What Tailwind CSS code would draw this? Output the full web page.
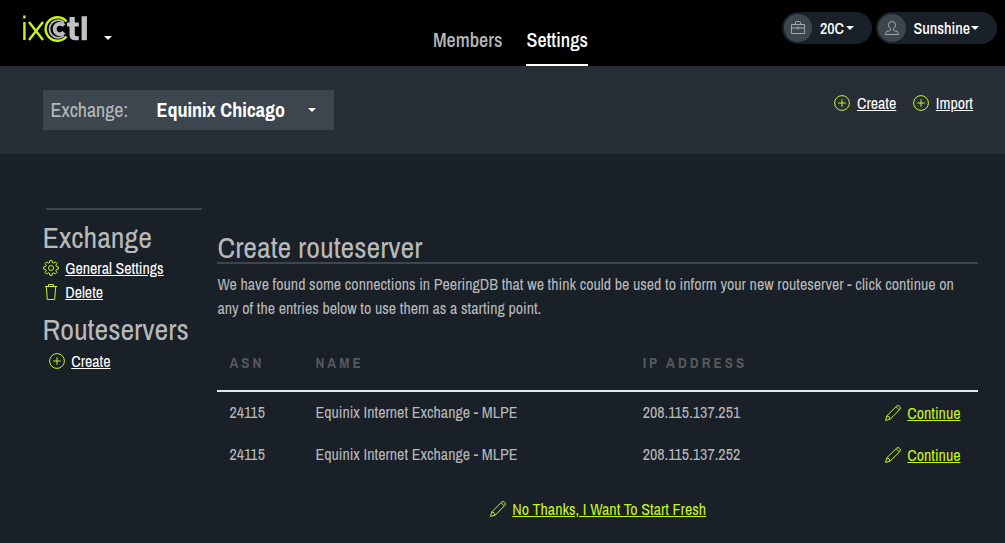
<!DOCTYPE html>
<html lang="en">
<head>
<meta charset="utf-8">
<title>ixCtl</title>
<script src="https://cdn.jsdelivr.net/npm/@tailwindcss/browser@4"></script>
</head>
<body class="h-[543px] w-[1005px] overflow-hidden bg-[#1a2027] font-['Archivo_Narrow','Liberation_Sans',sans-serif] text-base leading-6 text-[#b7b9ba]">
<svg class="hidden">
  <symbol id="plus" viewBox="0 0 16 16"><g fill="none" stroke="currentColor"><circle cx="8" cy="8" r="7.4"/><path d="M8 4.2v7.6M4.2 8h7.6"/></g></symbol>
  <symbol id="pencil" viewBox="0 0 16 16"><path fill="none" stroke="currentColor" stroke-linejoin="round" d="M.6 15.400 1.800 10.800 11.800 1Q13 0 14.200 1L15 1.800Q16 3 15 4.200L5.200 14.200ZM1.800 10.800Q4.600 11.200 5.200 14.200M11.200 1.800l3 3"/></symbol>
  <symbol id="caret" viewBox="0 0 8 4"><path fill="currentColor" d="M0 0h8L4 4z"/></symbol>
</svg>

<header class="flex h-[66px] justify-between bg-black">
  <div class="flex w-[433px] pl-[22px] pt-[13px]">
    <svg class="h-[30px] w-[68px]" viewBox="0 0 68 30" aria-label="ixCtl">
      <g fill="none" stroke="#c8f31d" stroke-width="2.4">
        <path d="M2.400 9v18M2.400 2.600v2.800"/>
        <path d="M7 9l14 18M21 9L7 27"/>
        <path stroke-width="2.400" d="M44.500 8.400A11.800 11.800 0 1 0 44.500 23.600"/>
      </g>
      <g fill="none" stroke="#b9bbbe">
        <path stroke-width="1.700" d="M42 9.300A8.800 8.800 0 1 0 42 22.700"/>
        <path stroke-width="4" d="M42 12.600A5.300 5.300 0 1 0 42 19.400"/>
      </g>
      <path fill="#c0c2c5" d="M47.500 4h5.300v5.400h4v4.200h-4v7.600q0 2 2 2h2v4h-4q-5.300 0-5.300-5.400v-8.200H45V9.400h2.500zM59.600 3.300h5.300v24h-5.300z"/>
    </svg>
    <svg class="ml-[14px] mt-[23px] h-1 w-2 text-white"><use href="#caret"/></svg>
  </div>
  <nav class="flex gap-6 text-xl font-medium">
    <a class="block h-[66px] pt-[25px] leading-[30px]">Members</a>
    <a class="block h-[66px] border-b-2 border-white pt-[25px] leading-[30px] text-white">Settings</a>
  </nav>
  <div class="flex w-[417px] justify-end gap-1 pr-2 pt-3 text-white">
    <div class="flex h-8 w-[90px] items-center rounded-full bg-[#1a2027] pl-0.5">
      <div class="flex size-7 items-center justify-center rounded-full bg-[#3d464f] text-[#a4a8ac]">
        <svg class="size-[14px]" viewBox="0 0 14 14" fill="none" stroke="currentColor"><path d="M.5 3.500h13v9H.5zM4.500 3.500V1.500q0-1 1-1h3q1 0 1 1v2M.5 7H6M8 7h5.500"/><circle cx="7" cy="7" r="1.100"/></svg>
      </div>
      <span class="ml-2 font-medium">20C</span>
      <svg class="ml-[2px] h-1 w-2"><use href="#caret"/></svg>
    </div>
    <div class="flex h-8 w-[121px] items-center rounded-full bg-[#1a2027] pl-0.5">
      <div class="flex size-7 items-center justify-center rounded-full bg-[#3d464f] text-[#a4a8ac]">
        <svg class="size-[14px]" viewBox="0 0 14 14" fill="none" stroke="currentColor" stroke-linejoin="round"><path d="M5.500 9V7.800Q3.500 6.500 3.500 3.800 3.500.5 7 .5t3.500 3.300Q10.500 6.500 8.500 7.800V9q0 .6 1 .8l2.500.7q1.500.5 1.500 3H.5q0-2.500 1.500-3L4.500 9.800q1-.2 1-.8z"/></svg>
      </div>
      <span class="ml-[7.5px] font-medium">Sunshine</span>
      <svg class="ml-px h-1 w-2"><use href="#caret"/></svg>
    </div>
  </div>
</header>

<section class="flex h-[88px] items-start justify-between bg-[#282e36] pl-[43px] pr-8 pt-6">
  <div class="flex h-10 w-[291px] items-center bg-[#3d464f] pl-[7.5px] text-xl">
    <span class="w-[106px]">Exchange:</span>
    <span class="font-bold text-white">Equinix Chicago</span>
    <svg class="ml-[22.5px] h-1 w-2 text-white"><use href="#caret"/></svg>
  </div>
  <div class="mt-[1px] flex gap-[17px] text-white">
    <a class="flex items-center"><svg class="mr-[6.5px] size-4 text-[#c8f31d]"><use href="#plus"/></svg><span class="underline">Create</span></a>
    <a class="flex items-center"><svg class="mr-[6.5px] size-4 text-[#c8f31d]"><use href="#plus"/></svg><span class="underline">Import</span></a>
  </div>
</section>

<main class="flex pl-[43px]">
  <aside class="w-[175px] pt-[54px] text-white">
    <div class="ml-[3px] h-0.5 w-[156px] bg-[#3d464f]"></div>
    <h2 class="-ml-[0.5px] mt-[9px] text-[30px] leading-9 text-[#b7b9ba]">Exchange</h2>
    <a class="mt-px flex h-6 items-center">
      <svg class="mr-[6.2px] size-4 text-[#c8f31d]" viewBox="0 0 16 16" fill="none" stroke="currentColor" stroke-linejoin="round"><circle cx="8" cy="8" r="2.500"/><path d="M6.900.6h2.200l.4 2 1.200.5 1.700-1.200 1.600 1.600-1.200 1.700.5 1.200 2 .4v2.300l-2 .4-.5 1.200 1.200 1.700-1.600 1.600-1.700-1.200-1.200.5-.4 2H6.900l-.4-2-1.200-.5-1.700 1.200L2 12.400l1.200-1.700-.5-1.200-2-.4V6.800l2-.4.5-1.200L2 3.500l1.600-1.600 1.700 1.200 1.200-.5z"/></svg>
      <span class="underline">General Settings</span></a>
    <a class="flex h-6 items-center">
      <svg class="mr-[6.2px] size-4 text-[#c8f31d]" viewBox="0 0 16 16" fill="none" stroke="currentColor"><path d="M2 2.500h12M5.500 2.500V.5h5v2M3.300 2.500l1 13h7.400l1-13"/></svg>
      <span class="underline">Delete</span></a>
    <h2 class="-ml-[0.5px] mt-[7px] text-[30px] leading-9 text-[#b7b9ba]">Routeservers</h2>
    <a class="mt-[2px] flex h-6 items-center pl-[6px]"><svg class="mr-[6.2px] size-4 text-[#c8f31d]"><use href="#plus"/></svg><span class="underline">Create</span></a>
  </aside>

  <article class="ml-[-0.6px] w-[760.6px] pt-[75px]">
    <h1 class="-ml-[0.4px] h-[35px] border-b-2 border-[#3d464f] pl-[0.4px] text-[30px] leading-9">Create routeserver</h1>
    <p class="mt-[8px]">We have found some connections in PeeringDB that we think could be used to inform your new routeserver - click continue on any of the entries below to use them as a starting point.</p>
    <div class="-ml-[0.4px] mt-[32px] grid h-[40px] grid-cols-[86px_327.3px_1fr] border-b-2 border-[#e4e6e8] pl-[12.4px] text-[15px] font-bold leading-[21px] tracking-[3px] text-[#55595d]">
      <span>ASN</span><span>NAME</span><span>IP ADDRESS</span>
    </div>
    <div class="grid h-[42px] grid-cols-[86px_327.3px_1fr_auto] pl-3 pr-[17.5px] pt-[8px]">
      <span>24115</span><span>Equinix Internet Exchange - MLPE</span><span>208.115.137.251</span>
      <a class="mt-px flex h-6 items-center text-[#c8f31d]"><svg class="mr-[6px] size-4"><use href="#pencil"/></svg><span class="underline">Continue</span></a>
    </div>
    <div class="grid h-[42px] grid-cols-[86px_327.3px_1fr_auto] pl-3 pr-[17.5px] pt-[8px]">
      <span>24115</span><span>Equinix Internet Exchange - MLPE</span><span>208.115.137.252</span>
      <a class="mt-px flex h-6 items-center text-[#c8f31d]"><svg class="mr-[6px] size-4"><use href="#pencil"/></svg><span class="underline">Continue</span></a>
    </div>
    <a class="mt-[21px] flex items-center justify-center pl-[0.6px] text-[#c8f31d]"><svg class="mr-[6.5px] size-4"><use href="#pencil"/></svg><span class="underline">No Thanks, I Want To Start Fresh</span></a>
  </article>
</main>
</body>
</html>
